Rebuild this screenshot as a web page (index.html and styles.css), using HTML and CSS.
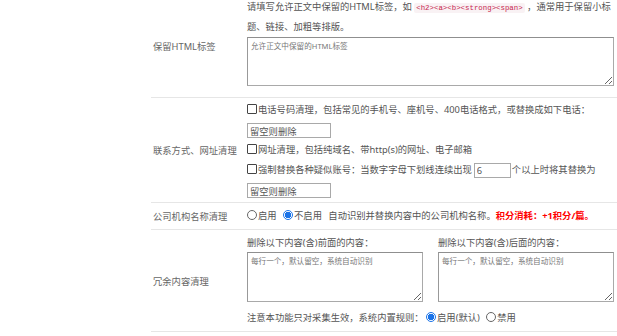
FILE: index.html
```html
<!DOCTYPE html>
<html lang="zh-CN">
<head>
	<meta charset="UTF-8">
	<title>采集规则设置</title>
	<link rel="stylesheet" href="styles.css">
</head>
<body>
	<div class="form">
		<div class="row row-html">
			<div class="label">保留HTML标签</div>
			<div class="field">
				<p class="tip">请填写允许正文中保留的HTML标签，如 <code>&lt;h2&gt;&lt;a&gt;&lt;b&gt;&lt;strong&gt;&lt;span&gt;</code> ，通常用于保留小标<br>题、链接、加粗等排版。</p>
				<textarea class="area area-wide" placeholder="允许正文中保留的HTML标签"></textarea>
			</div>
		</div>
		<div class="row row-contact">
			<div class="label">联系方式、网址清理</div>
			<div class="field">
				<div class="line"><label class="chk"><input type="checkbox" class="check">电话号码清理，包括常见的手机号、座机号、400电话格式，或替换成如下电话：</label></div>
				<div class="line"><input type="text" class="text" value="留空则删除"></div>
				<div class="line"><label class="chk"><input type="checkbox" class="check">网址清理，包括纯域名、带http(s)的网址、电子邮箱</label></div>
				<div class="line"><label class="chk"><input type="checkbox" class="check">强制替换各种疑似账号：当数字字母下划线连续出现</label><input type="text" class="text text-num" value="6">个以上时将其替换为</div>
				<div class="line"><input type="text" class="text" value="留空则删除"></div>
			</div>
		</div>
		<div class="row">
			<div class="label">公司机构名称清理</div>
			<div class="field">
				<div class="line">
					<label class="opt"><input type="radio" name="company" class="radio">启用</label>
					<label class="opt"><input type="radio" name="company" class="radio" checked>不启用</label>
					自动识别并替换内容中的公司机构名称。<span class="cost">积分消耗：+1积分/篇。</span>
				</div>
			</div>
		</div>
		<div class="row row-redundant">
			<div class="label">冗余内容清理</div>
			<div class="field">
				<div class="cols">
					<div class="col">
						<div class="line">删除以下内容(含)前面的内容：</div>
						<textarea class="area" placeholder="每行一个，默认留空，系统自动识别"></textarea>
					</div>
					<div class="col">
						<div class="line">删除以下内容(含)后面的内容：</div>
						<textarea class="area" placeholder="每行一个，默认留空，系统自动识别"></textarea>
					</div>
				</div>
				<div class="line note">
					注意本功能只对采集生效，系统内置规则：
					<label class="opt"><input type="radio" name="builtin" class="radio" checked>启用(默认)</label>
					<label class="opt"><input type="radio" name="builtin" class="radio">禁用</label>
				</div>
			</div>
		</div>
	</div>
</body>
</html>
```

FILE: styles.css
```css
* {
	padding: 0;
	margin: 0;
	box-sizing: border-box;
}
body {
	background: #fff;
	font-family: "Noto Sans", "Noto Sans CJK SC", sans-serif;
	font-size: 9.3px;
	color: #555;
	overflow: hidden;
}
.form {
	margin: -6px 0 0 151px;
	width: 466px;
}
.row {
	display: grid;
	grid-template-columns: 96px 1fr;
	align-items: center;
	padding: 3px 3px 3px 0;
	border-bottom: 1px solid #e6e6e6;
}
.row-contact {
	padding: 2px 3px 2px 0;
}
.label {
	padding-left: 2px;
	color: #666;
}
.tip {
	line-height: 20px;
	white-space: nowrap;
}
code {
	font-family: "Liberation Mono", monospace;
	font-size: 7.4px;
	line-height: 1;
	color: #c7254e;
	background: #f9f2f4;
	padding: 1px 2px;
	border-radius: 2px;
}
.line {
	line-height: 20px;
	height: 20px;
	white-space: nowrap;
}
.area {
	display: block;
	width: 100%;
	height: 50px;
	border: 1px solid #a9a9a9;
	border-top-color: #8f8f8f;
	border-left-color: #999;
	padding: 2px 3px;
	font-family: inherit;
	font-size: 7.6px;
	color: #555;
	resize: both;
	outline: none;
}
.area::placeholder {
	color: #777;
}
.area-wide {
	height: 49px;
	margin-bottom: 8px;
}
.text {
	width: 84px;
	height: 15px;
	border: 1px solid #a9a9a9;
	padding: 0 2px;
	font-family: inherit;
	font-size: 9.3px;
	color: #555;
	vertical-align: middle;
	outline: none;
}
.text-num {
	width: 37px;
	margin: 0 1px 0 2px;
}
.check {
	-webkit-appearance: none;
	appearance: none;
	width: 10px;
	height: 10px;
	border: 1px solid #444;
	border-radius: 1px;
	background: #fff;
	vertical-align: -1px;
	margin-right: 1px;
}
.radio {
	-webkit-appearance: none;
	appearance: none;
	width: 10px;
	height: 10px;
	border: 1px solid #666;
	border-radius: 50%;
	background: #fff;
	vertical-align: -1px;
	margin-right: 1px;
}
.radio:checked {
	border-color: #1a73e8;
	background: radial-gradient(circle, #1a73e8 0 3px, #fff 3.5px);
}
.opt {
	margin-right: 4px;
}
.cost {
	color: #f00;
	font-weight: bold;
}
.cols {
	display: grid;
	grid-template-columns: 176px 176px;
	column-gap: 15px;
}
.col .area {
	margin-top: -1px;
}
.note {
	margin-top: 6px;
}
```
